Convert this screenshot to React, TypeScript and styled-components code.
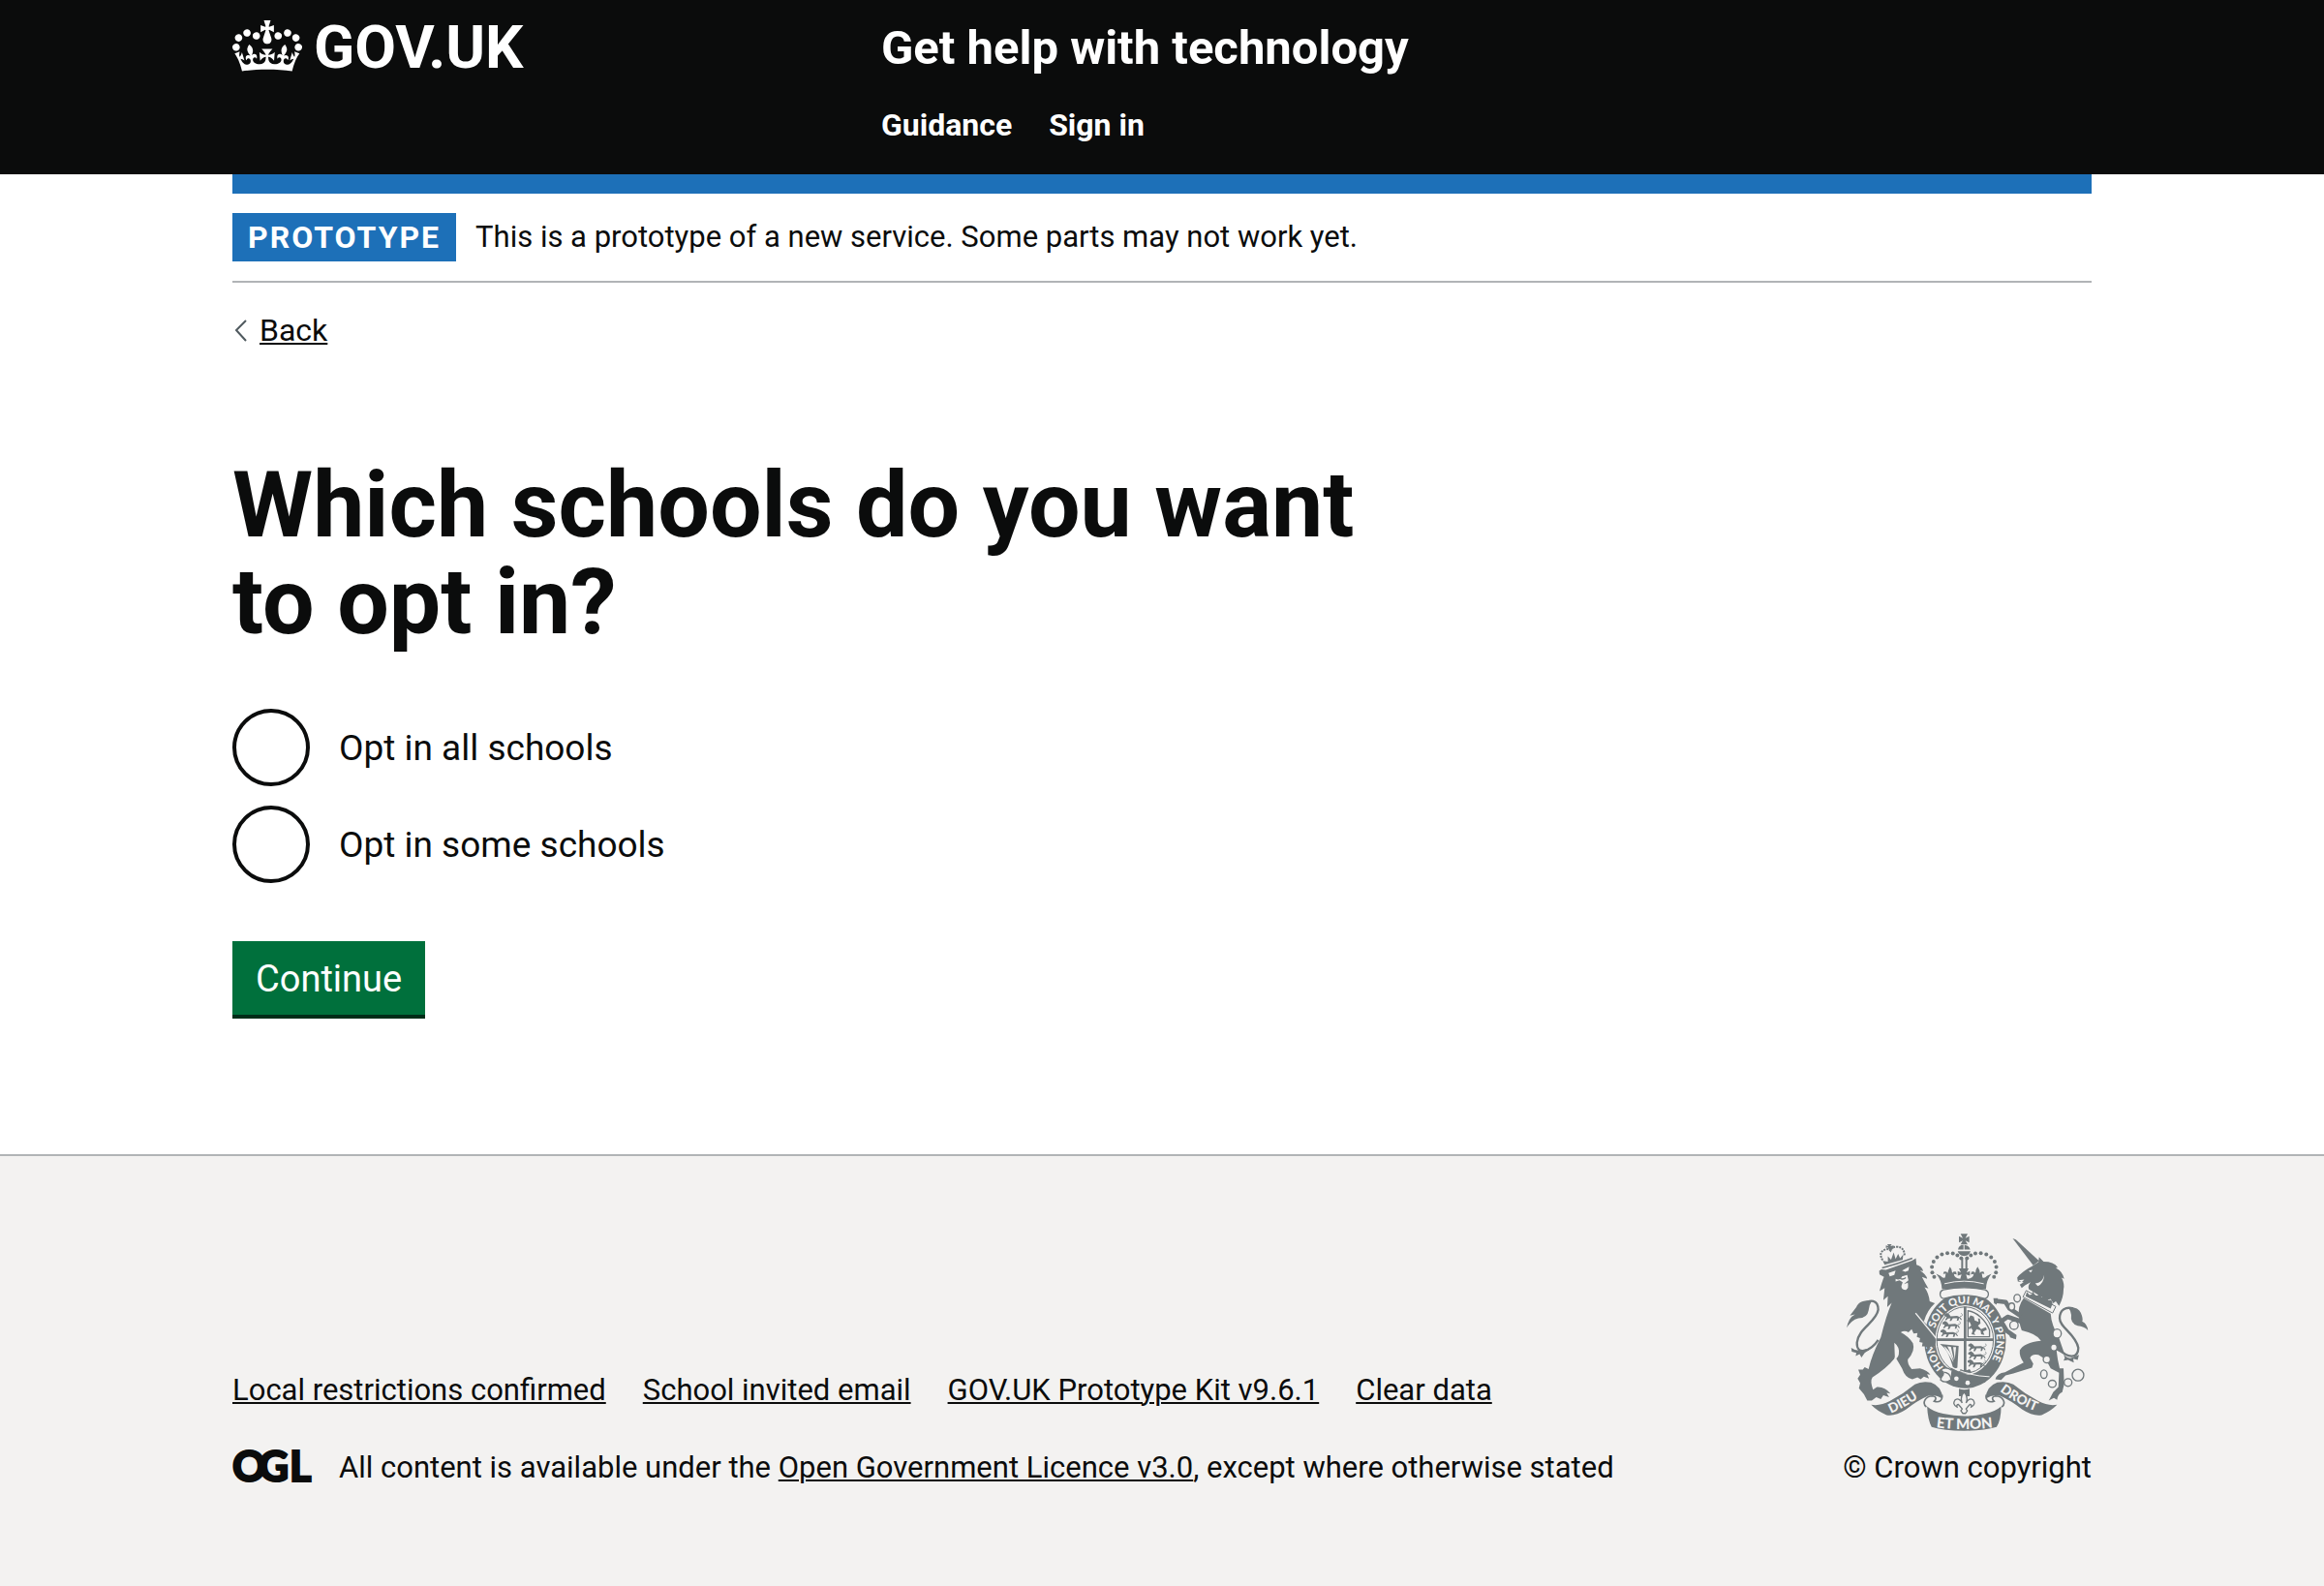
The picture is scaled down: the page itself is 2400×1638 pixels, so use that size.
import React from 'react';
import styled, { createGlobalStyle } from 'styled-components';

const ink = '#0b0c0c';
const blue = '#1d70b8';
const grey = '#b1b4b6';
const pale = '#f3f2f1';
const crest = '#70787b';

const GlobalStyle = createGlobalStyle`
  *, *::before, *::after { box-sizing: border-box; }
  html { background: ${pale}; }
  body {
    margin: 0;
    background: #fff;
    color: ${ink};
    font-family: Roboto, Arial, sans-serif;
    font-size: 31px;
    line-height: 40px;
    -webkit-font-smoothing: antialiased;
  }
`;

const Container = styled.div`
  width: calc(100% - 60px);
  max-width: 1920px;
  margin: 0 auto;
`;

const Header = styled.header`
  background: ${ink};
  color: #fff;
  padding: 16px 0 20px;
`;

const HeaderRow = styled(Container)`
  display: flex;
  align-items: flex-start;
`;

const LogoColumn = styled.div`
  flex: 0 0 33.33%;
`;

const LogoLink = styled.a`
  display: inline-flex;
  align-items: flex-start;
  gap: 12px;
  color: #fff;
  font-size: 62px;
  font-weight: 700;
  line-height: 66px;
  text-decoration: none;

  svg { margin-top: 5px; }
`;

const HeaderContent = styled.div`
  padding-left: 30px;
  display: flex;
  flex-direction: column;
  gap: 20px;
`;

const ServiceName = styled.a`
  color: #fff;
  font-size: 49px;
  font-weight: 700;
  line-height: 68px;
  text-decoration: none;
`;

const Navigation = styled.nav`
  display: flex;
  gap: 38px;
  padding: 5px 0 11px;
`;

const NavLink = styled.a`
  color: #fff;
  font-size: 32px;
  font-weight: 700;
  text-decoration: none;
`;

const BlueBar = styled.div`
  height: 20px;
  background: ${blue};
`;

const PhaseBanner = styled.div`
  display: flex;
  align-items: center;
  gap: 20px;
  padding: 20px 0;
  border-bottom: 2px solid ${grey};
`;

const PhaseTag = styled.strong`
  padding: 5px 16px;
  background: ${blue};
  color: #fff;
  font-size: 32px;
  letter-spacing: 2px;
  text-transform: uppercase;
`;

const Link = styled.a`
  color: ${ink};
  text-decoration: underline;
  text-decoration-thickness: 2px;
  text-underline-offset: 2px;
`;

const BackLink = styled(Link)`
  display: flex;
  align-items: center;
  gap: 12px;
  width: fit-content;
  margin-top: 29px;
  font-size: 32px;
  text-decoration: none;

  svg { margin-left: 2px; }
  span {
    text-decoration: underline;
    text-decoration-thickness: 2px;
    text-underline-offset: 2px;
  }
`;

const Main = styled.main`
  padding: 111px 0 144px;
`;

const Column = styled.form`
  max-width: 1240px;
`;

const Fieldset = styled.fieldset`
  min-width: 0;
  margin: 0;
  padding: 0;
  border: 0;
`;

const Legend = styled.legend`
  padding: 0;
`;

const Heading = styled.h1`
  margin: 0 0 60px;
  font-size: 95px;
  font-weight: 700;
  line-height: 100px;
`;

const Radios = styled.div`
  display: flex;
  flex-direction: column;
  gap: 20px;
`;

const RadioItem = styled.div`
  display: flex;
  align-items: center;
`;

const RadioInput = styled.input`
  appearance: none;
  flex: none;
  width: 80px;
  height: 80px;
  margin: 0;
  border: 4px solid ${ink};
  border-radius: 50%;
  background: transparent;
  cursor: pointer;

  &:checked {
    background: radial-gradient(circle, ${ink} 0 20px, transparent 21px);
  }
  &:focus-visible {
    outline: 6px solid #fd0;
  }
`;

const RadioLabel = styled.label`
  padding: 2px 30px 0;
  font-size: 37px;
  line-height: 50px;
  cursor: pointer;
`;

const Button = styled.button`
  display: block;
  margin: 60px 0 0;
  padding: 14px 24px 12px;
  border: 0;
  background: #00703c;
  box-shadow: 0 4px 0 #002d18;
  color: #fff;
  font: inherit;
  font-size: 38px;
  line-height: 50px;
  cursor: pointer;
`;

const Footer = styled.footer`
  padding: 80px 0 100px;
  border-top: 2px solid ${grey};
  background: ${pale};
`;

const FooterRow = styled(Container)`
  display: flex;
  align-items: flex-end;
  justify-content: space-between;
  gap: 60px;
`;

const FooterMeta = styled.div`
  display: flex;
  flex-direction: column;
  gap: 40px;
`;

const FooterLinks = styled.ul`
  display: flex;
  flex-wrap: wrap;
  gap: 20px 38px;
  margin: 0;
  padding: 0;
  list-style: none;
`;

const Licence = styled.div`
  display: flex;
  align-items: center;
  gap: 26px;

  svg { flex: none; }
`;

const Copyright = styled.a`
  display: flex;
  flex: none;
  flex-direction: column;
  align-items: center;
  gap: 18px;
  color: ${ink};
  text-decoration: none;
`;

const CrownIcon = () => (
  <svg width="72" height="53" viewBox="0 0 132 97" fill="currentColor" fillRule="evenodd" aria-hidden="true">
    <path d="M25 30.2c3.5 1.5 7.7-.2 9.1-3.7 1.5-3.6-.2-7.8-3.9-9.2-3.6-1.4-7.6.3-9.1 3.9-1.4 3.5.3 7.5 3.9 9zM9 39.5c3.6 1.5 7.8-.2 9.2-3.7 1.5-3.6-.2-7.8-3.9-9.1-3.6-1.5-7.6.2-9.1 3.8-1.4 3.5.3 7.5 3.8 9zM4.4 57.2c3.5 1.5 7.7-.2 9.1-3.8 1.5-3.6-.2-7.7-3.9-9.1-3.5-1.5-7.6.3-9.1 3.8-1.4 3.5.3 7.6 3.9 9.1zm38.3-21.4c3.5 1.5 7.7-.2 9.1-3.8 1.5-3.6-.2-7.7-3.9-9.1-3.6-1.5-7.6.3-9.1 3.8-1.3 3.6.4 7.7 3.9 9.1zm64.4-5.6c-3.6 1.5-7.8-.2-9.1-3.7-1.5-3.6.2-7.8 3.8-9.2 3.6-1.4 7.7.3 9.2 3.9 1.3 3.5-.4 7.5-3.9 9zm15.9 9.3c-3.6 1.5-7.7-.2-9.1-3.7-1.5-3.6.2-7.8 3.7-9.1 3.6-1.5 7.7.2 9.2 3.8 1.5 3.5-.3 7.5-3.8 9zm4.7 17.7c-3.6 1.5-7.8-.2-9.2-3.8-1.5-3.6.2-7.7 3.9-9.1 3.6-1.5 7.7.3 9.2 3.8 1.3 3.5-.4 7.6-3.9 9.1zM89.3 35.8c-3.6 1.5-7.8-.2-9.2-3.8-1.4-3.6.2-7.7 3.9-9.1 3.6-1.5 7.7.3 9.2 3.8 1.4 3.6-.3 7.7-3.9 9.1zM69.7 17.7l8.9 4.7V9.3l-8.9 2.8c-.2-.3-.5-.6-.9-.9L72.4 0H59.6l3.5 11.2c-.3.3-.6.5-.9.9l-8.8-2.8v13.1l8.8-4.7c.3.3.6.7.9.9l-5 15.4v.1c-.2.8-.4 1.6-.4 2.4 0 4.1 3.1 7.5 7 8.1h.2c.3 0 .7.1 1 .1.4 0 .7 0 1-.1h.2c4-.6 7.1-4.1 7.1-8.1 0-.8-.1-1.7-.4-2.4V34l-5.1-15.4c.4-.2.7-.6 1-.9zM66 92.8c16.9 0 32.8 1.1 47.1 3.2 4-16.9 8.9-26.7 14-33.5l-9.6-3.4c1 4.9 1.1 7.2 0 10.2-1.5-1.4-3-4.3-4.2-8.7L108.6 76c2.8-2 5-3.2 7.5-3.3-4.4 9.4-10 11.9-13.6 11.2-4.3-.8-6.3-4.6-5.6-7.9 1-4.7 5.7-5.9 8-.5 4.3-8.7-3-11.4-7.6-8.8 7.1-7.2 7.9-13.5 2.1-21.1-8 6.1-8.1 12.3-4.5 20.8-4.7-5.4-12.1-2.5-9.5 6.2 3.4-5.2 7.9-2 7.2 3.1-.6 4.3-6.4 7.8-13.5 7.2-10.3-.9-10.9-8-11.2-13.8 2.5-.5 7.1 1.8 11 7.3L80.2 60c-4.1 4.4-8 5.3-12.3 5.4 1.4-4.4 8-11.6 8-11.6H55.5s6.4 7.2 7.9 11.6c-4.2-.1-8-1-12.3-5.4l1.4 16.4c3.9-5.5 8.5-7.7 10.9-7.3-.3 5.8-.9 12.8-11.1 13.8-7.2.6-12.9-2.9-13.5-7.2-.7-5 3.8-8.3 7.1-3.1 2.7-8.7-4.6-11.6-9.4-6.2 3.7-8.5 3.6-14.7-4.6-20.8-5.8 7.6-5 13.9 2.2 21.1-4.7-2.6-11.9.1-7.7 8.8 2.3-5.5 7.1-4.2 8.1.5.7 3.3-1.3 7.1-5.7 7.9-3.5.7-9-1.8-13.5-11.2 2.5.1 4.7 1.3 7.5 3.3l-4.7-15.4c-1.2 4.4-2.7 7.2-4.3 8.7-1.1-3-.9-5.3 0-10.2l-9.5 3.4c5 6.9 9.9 16.7 14 33.5 14.8-2.1 30.8-3.2 47.7-3.2z" />
  </svg>
);

const ChevronLeft = () => (
  <svg width="14" height="24" viewBox="0 0 14 24" fill="none" stroke="#505a5f" strokeWidth="2" aria-hidden="true">
    <path d="M12 2 2 12l10 11" />
  </svg>
);

const OglLogo = () => (
  <svg width="84" height="40" viewBox="0 0 84 40" fill={ink} role="img" aria-label="Open Government Licence">
    <text x="0 27 59" y="34" fontFamily="Lato, sans-serif" fontWeight="900" fontSize="43" stroke={ink} strokeWidth="2">OGL</text>
  </svg>
);

const pearls = [
  [344, 206], [338, 192], [337, 175], [342, 158], [353, 145],
  [368, 136], [385, 132], [402, 133], [416, 139], [428, 148],
];

const PassantLion = ({ x, y }: { x: number; y: number }) => (
  <g transform={`translate(${x} ${y})`}>
    <path d="M0 4l8-4 7 4 4 6 20-1 10 4 5 8-3 1-5-7-3 9h-5l2-8-14 0-5 9h-5l3-9-8 1-6 6-3-2 5-8-3-3-4 0z" />
    <path d="M48 10c8 2 10-6 4-9" fill="none" stroke="currentColor" strokeWidth="2" />
  </g>
);

const RoyalArms = () => (
  <svg width="250" height="204" viewBox="73 71 750 614" fill="currentColor" color={crest} aria-hidden="true">
    <defs>
      <path id="garter-left" d="M374 487A98 115 0 0 1 342 396" />
      <path id="garter-top" d="M347 366A98 115 0 1 1 500 494" />
      <path id="dieu" d="M210 630Q262 608 326 560" />
      <path id="droit" d="M548 561Q604 604 684 632" />
      <path id="etmon" d="M340 672Q437 686 536 672" />
    </defs>

    {/* Garter and shield */}
    <ellipse cx="440" cy="402" rx="127" ry="150" />
    <g fill={pale} fontFamily="Lato, sans-serif" fontWeight="900" fontSize="33">
      <text><textPath href="#garter-left">HONI</textPath></text>
      <text><textPath href="#garter-top">SOIT QUI MAL Y PENSE</textPath></text>
    </g>
    <ellipse cx="440" cy="402" rx="93" ry="108" fill={pale} />
    <ellipse cx="440" cy="402" rx="88" ry="103" fill="none" stroke="currentColor" strokeWidth="3" />
    <path d="M436 298h8v206h-8zM351 397h178v8H351z" />
    <PassantLion x={376} y={318} />
    <PassantLion x={370} y={343} />
    <PassantLion x={364} y={368} />
    <PassantLion x={450} y={412} />
    <PassantLion x={450} y={437} />
    <PassantLion x={448} y={462} />
    <path d="M449 392V311c28 4 54 28 67 60v21z" fill="none" stroke="currentColor" strokeWidth="4" />
    <path d="M457 325l10 4 3 12 12 5-2-12 6 2 2 14-8 8 10 10 14-6 4 8-12 6 4 10-10-2-2-12-12-4-8 12 4 6-12-2 4-12-6-8-4 6-3-7 8-6-4-10-10-4z" />
    <path d="M362 414l58 6-4 68c-6 4-12 2-14-2-8-30-18-56-40-72zm12 7c16 10 25 26 30 52zm11 1 21 45-10-44zm18 2 5 38 4-38z" fillRule="evenodd" />
    <path d="M426 492q14 8 28 0l6 10h-40z" />
    {/* Strap and buckle */}
    <path d="M396 488Q450 518 510 522l-8 12-110-12z" />
    <path d="M398 486Q452 514 516 516" fill="none" stroke={pale} strokeWidth="3" />
    <circle cx="413" cy="522" r="7" fill={pale} />
    <circle cx="448" cy="535" r="7" fill={pale} />
    <path d="M398 496q-20-14-34 0 12 4 8 14-8 10-8 16 14 12 30 0" fill={pale} stroke="currentColor" strokeWidth="4" />
    <path d="M374 502q20 2 22 22" fill="none" stroke="currentColor" strokeWidth="4" />

    {/* Crown */}
    {pearls.map(([x, y]) => (
      <React.Fragment key={y}>
        <circle cx={x} cy={y} r="6" />
        <circle cx={874 - x} cy={y} r="6" />
      </React.Fragment>
    ))}
    <path d="M426 72h22l-7 13 12-6v20l-12-6 7 12h-22l7-12-12 6V79l12 6z" />
    <path d="M418 121q2-15 17-15v15zm20-15q16 2 18 15h-18zM417 126h40q-4 14-20 15-16-1-20-15z" />
    <path d="M428 148h6v36h-6zm13 0h6v36h-6z" />
    <path d="M350 196l14 7q8 9 14 4l2-12-8 2 2-7q8-2 12 4 2-10 7-20 7 8 7 20 4-6 12-4l2 8-9-1q2 14 20 15l4-14-12 4v-14l10 4-6-13h30l-6 13 10-4v14l-12-4 4 14q18-1 20-15l-9 1 2-8q8-2 12 4 0-12 7-20 7 10 7 20 4-6 12-4l2 7-8-2 2 12q6 5 14-4l14-7q-16 20-17 47H368q-1-27-18-47z" />
    <path d="M376 227q61-16 122 0" fill="none" stroke={pale} strokeWidth="3" />
    <path d="M372 246q66-14 130 0c16 6 12 26-2 27q-62-20-126 0c-14-2-16-22-2-27z" fill={pale} stroke="currentColor" strokeWidth="4" />

    {/* Lion */}
    <g transform="translate(60 60)">
      <path d="M110 342C86 378 42 392 44 350 48 306 104 286 110 248 110 216 84 214 66 232" fill="none" stroke="currentColor" strokeWidth="7" />
      <path d="M90 220C60 218 48 226 42 240L22 266 38 262Q18 272 12 304 26 280 48 274 76 274 80 250 82 232 90 220z" />
      <path d="M26 366q14 10 28 8l36-8-22 16-10 14-6-10-12 6 2-10-14-4z" />
      <path d="M113 127L120 122 134 124 215 95 227 88 229 108Q246 112 250 128L240 126Q260 138 262 152L246 146Q256 166 266 182L254 178Q268 198 270 222L286 228Q262 250 252 284L226 262Q258 286 276 314 292 336 288 350L282 368 274 362 264 374 260 362 246 362 248 350 238 348 240 336 230 332 232 320 220 322 214 308 204 318Q192 310 180 318 204 330 218 352 226 376 202 402 200 416 214 432L240 430Q264 436 272 450L262 448 268 462 252 456 242 464 232 458 216 464Q194 460 184 430 166 400 162 392L160 352Q166 392 160 400 138 428 92 458 84 470 94 496L106 488Q130 486 148 508L136 506 144 520 126 514 118 526 104 520 90 530 76 530Q68 510 50 492L54 476 46 462 54 450 48 434 62 434 68 426 80 432Q90 388 118 334 134 268 152 226L138 240 140 206 126 218 130 180 114 190Q122 160 128 146L114 138z" />
      <path d="M160 350q18 14 14 36-2 12-12 16" fill={pale} />
      <path d="M226 258L290 336" fill="none" stroke={pale} strokeWidth="4" />
      <path d="M142 134l22-8-4 14-14 4zM184 126l22-12-2 12-10 4zM164 152q14 6 20-8l16-4 4 16-14 12 12-4q4 18-6 22-14 0-14-12l4-12-10-6-12 4z" fill={pale} />
      <path d="M178 150q8 6 18-2" fill="none" stroke="currentColor" strokeWidth="4" />
      <path d="M124 96L130 108 186 92 188 76 178 88 172 74 164 90 158 70 150 92 140 82 140 98z" />
      <path d="M124 94q-16-26 10-34 8-2 14 4 4-12 22-12 22 2 22 30" fill="none" stroke="currentColor" strokeWidth="6" strokeDasharray="6 3" />
      <path d="M138 44h14l-4 6 10-2v10l-8-2 4 8-10-2-4-8-6 2v-8l8 2z" />
      <path d="M122 118Q170 106 216 88" fill="none" stroke="currentColor" strokeWidth="5" />
    </g>

    {/* Unicorn */}
    <g transform="translate(510 60)">
      <path d="M222 370C250 400 282 400 282 366 274 322 224 304 224 274 224 246 244 238 266 244" fill="none" stroke="currentColor" strokeWidth="7" />
      <path d="M250 240Q282 238 290 258 298 278 294 284 310 292 312 312 300 300 280 298 256 290 260 264 258 250 250 240z" />
      <path d="M236 386q10 14 24 12l24-10-4 16-14-4 2 12-18-8-14 2 4-8z" />
      <path d="M78 26L88 30 160 96 142 110z" />
      <path d="M142 110L158 100 160 84 174 98Q206 98 218 116L212 118Q234 130 238 152L230 148Q240 168 236 184 236 210 222 236L212 222 204 228 196 214 184 218 128 184Q124 172 134 162L116 172 106 180 100 170 112 162 94 160 92 148Q104 130 142 110z" />
      <path d="M128 126l12-2-6 8zM148 166q22 0 28-26-2 28-20 34zM96 156l18-2-8 8z" fill={pale} />
      <path d="M120 188L212 238 202 258 110 208z" fill={pale} stroke="currentColor" strokeWidth="3" />
      <path d="M118 206l4-14 8 10 8-2 2-10 8 14 8 0 4-8 8 14 10 0 4-8 6 16 10 0 4 10-6 16z" />
      <path d="M112 212L196 260Q198 294 222 336L240 388 214 374 218 402 224 430 236 430 238 480 232 504Q218 510 216 528L206 522 190 530 204 504 220 488 222 444 196 430Q182 400 158 388 136 384 132 398L142 416 138 428 80 446 56 452 42 466 24 464Q30 444 54 442L112 412Q98 394 100 374 112 350 166 344 152 322 106 312 96 284 98 266 92 240 112 212z" />
      <path d="M104 268L68 244 56 224 24 220M104 284L62 270 42 284 60 314 86 332" fill="none" stroke="currentColor" strokeWidth="14" strokeLinejoin="round" />
      <path d="M18 212l14 0-4 20-8-4zM66 322l24 6-2 12-18-6z" />
      <g fill={pale} stroke="currentColor" strokeWidth="4">
        <ellipse cx="92" cy="212" rx="10" ry="12" />
        <ellipse cx="75" cy="238" rx="9" ry="11" />
        <ellipse cx="82" cy="296" rx="13" ry="13" />
        <ellipse cx="216" cy="322" rx="13" ry="14" />
        <ellipse cx="206" cy="365" rx="10" ry="11" />
        <ellipse cx="184" cy="402" rx="11" ry="11" />
        <ellipse cx="175" cy="448" rx="10" ry="13" />
        <ellipse cx="201" cy="478" rx="12" ry="11" />
        <ellipse cx="250" cy="474" rx="12" ry="12" />
        <circle cx="281" cy="451" r="18" />
      </g>
    </g>

    {/* Motto ribbons */}
    <path d="M320 610C306 600 314 576 340 576 350 578 352 584 344 592 360 598 372 588 368 572M554 610C568 600 560 576 534 576 524 578 522 584 530 592 514 598 502 588 506 572" fill="none" stroke="currentColor" strokeWidth="5" />
    <path d="M148 603Q176 608 206 592 248 570 284 540 306 528 334 534 368 546 370 584 346 568 324 576 292 590 256 618 222 640 196 635 166 622 148 603z" />
    <path d="M726 603Q698 608 668 592 626 570 590 540 568 528 540 534 506 546 504 584 528 568 550 576 582 590 618 618 652 640 678 635 708 622 726 603z" />
    <path d="M322 608Q340 624 372 631 437 646 502 631 534 624 552 608 552 650 538 672 500 684 437 684 374 684 336 672 324 650 322 608z" />
    <g fill={pale} fontFamily="Lato, sans-serif" fontWeight="900">
      <text fontSize="41"><textPath href="#dieu">DIEU</textPath></text>
      <text fontSize="41"><textPath href="#droit">DROIT</textPath></text>
      <text fontSize="45"><textPath href="#etmon" startOffset="50%" textAnchor="middle">ET MON</textPath></text>
    </g>
    <path d="M421 553q16 6 33 0v24h-33z" />
    <path d="M437 564q14 14 6 34 8-18 22-10 10 14-6 22 2-8-4-8-6 6-12 14l4 6-6 8h-8l-6-8 4-6q-6-8-12-14-6 0-4 8-16-8-6-22 14-8 22 10-8-20 6-34z" fill={pale} stroke="currentColor" strokeWidth="4" />
  </svg>
);

const options = [
  { id: 'opt-in-all', value: 'all', label: 'Opt in all schools' },
  { id: 'opt-in-some', value: 'some', label: 'Opt in some schools' },
];

const footerLinks = [
  'Local restrictions confirmed',
  'School invited email',
  'GOV.UK Prototype Kit v9.6.1',
  'Clear data',
];

export default function App() {
  return (
    <>
      <GlobalStyle />
      <Header>
        <HeaderRow>
          <LogoColumn>
            <LogoLink href="#"><CrownIcon /><span>GOV.UK</span></LogoLink>
          </LogoColumn>
          <HeaderContent>
            <ServiceName href="#">Get help with technology</ServiceName>
            <Navigation>
              <NavLink href="#">Guidance</NavLink>
              <NavLink href="#">Sign in</NavLink>
            </Navigation>
          </HeaderContent>
        </HeaderRow>
      </Header>
      <Container>
        <BlueBar />
        <PhaseBanner>
          <PhaseTag>Prototype</PhaseTag>
          <span>This is a prototype of a new service. Some parts may not work yet.</span>
        </PhaseBanner>
        <BackLink href="#"><ChevronLeft /><span>Back</span></BackLink>
        <Main>
          <Column onSubmit={(event: React.FormEvent) => event.preventDefault()}>
            <Fieldset>
              <Legend><Heading>Which schools do you want to opt in?</Heading></Legend>
              <Radios>
                {options.map((option) => (
                  <RadioItem key={option.id}>
                    <RadioInput type="radio" name="opt-in" id={option.id} value={option.value} />
                    <RadioLabel htmlFor={option.id}>{option.label}</RadioLabel>
                  </RadioItem>
                ))}
              </Radios>
            </Fieldset>
            <Button type="submit">Continue</Button>
          </Column>
        </Main>
      </Container>
      <Footer>
        <FooterRow>
          <FooterMeta>
            <FooterLinks>
              {footerLinks.map((label) => (
                <li key={label}><Link href="#">{label}</Link></li>
              ))}
            </FooterLinks>
            <Licence>
              <OglLogo />
              <span>
                All content is available under the <Link href="#">Open Government Licence v3.0</Link>, except where otherwise stated
              </span>
            </Licence>
          </FooterMeta>
          <Copyright href="#">
            <RoyalArms />
            <span>© Crown copyright</span>
          </Copyright>
        </FooterRow>
      </Footer>
    </>
  );
}
